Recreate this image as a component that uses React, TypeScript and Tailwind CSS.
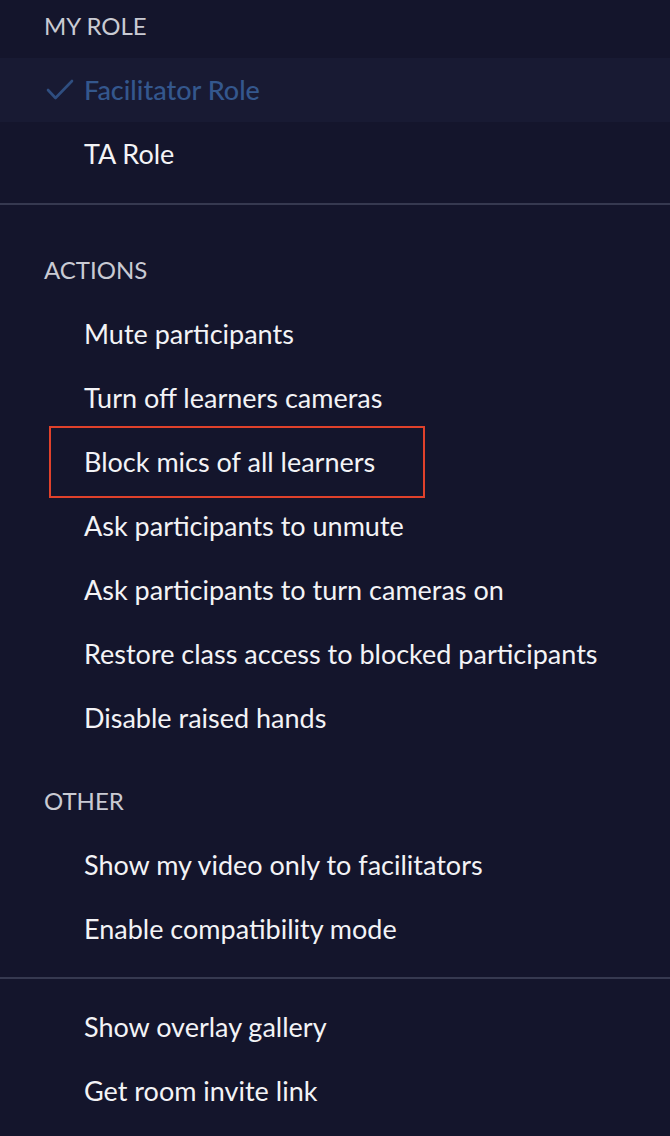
interface MenuItem {
    label: string;
    selected?: boolean;
    flagged?: boolean;
}

const roles: MenuItem[] = [
    { label: "Facilitator Role", selected: true },
    { label: "TA Role" },
];

const actions: MenuItem[] = [
    { label: "Mute participants" },
    { label: "Turn off learners cameras" },
    { label: "Block mics of all learners", flagged: true },
    { label: "Ask participants to unmute" },
    { label: "Ask participants to turn cameras on" },
    { label: "Restore class access to blocked participants" },
    { label: "Disable raised hands" },
];

const other: MenuItem[] = [
    { label: "Show my video only to facilitators" },
    { label: "Enable compatibility mode" },
];

const extras: MenuItem[] = [
    { label: "Show overlay gallery" },
    { label: "Get room invite link" },
];

function CheckMark() {
    return (
        <svg width="28" height="22" viewBox="0 0 28 22" fill="none" className="text-[#2f4e80]">
            <polyline points="2,11 9.5,19 26,2" stroke="currentColor" strokeWidth="2.6" strokeLinecap="round" strokeLinejoin="round" />
        </svg>
    );
}

function SectionTitle({ children }: { children: string }) {
    return (
        <div className="h-8 mb-4 px-[44px] flex items-center text-[24px] text-[#c9cad3]">
            {children}
        </div>
    );
}

function Row({ item }: { item: MenuItem }) {
    return (
        <div className={`h-16 flex items-center ${item.selected ? "bg-[#181a33]" : ""}`}>
            <div className="w-[84px] flex-shrink-0 flex justify-end pr-[10px]">
                {item.selected && <CheckMark />}
            </div>
            {item.flagged ? (
                <div className="-ml-[35px] h-[72px] w-[376px] border-2 border-[#e0412b] flex items-center pl-[33px]">
                    <span className="text-[27px] text-[#f3f3f6]">{item.label}</span>
                </div>
            ) : (
                <span className={`text-[27px] ${item.selected ? "text-[#34578d] font-medium" : "text-[#f3f3f6]"}`}>
                    {item.label}
                </span>
            )}
        </div>
    );
}

export default function App() {
    return (
        <div className="w-[670px] h-[1136px] overflow-hidden bg-[#14152c] font-['Lato',sans-serif]">
            <div className="pt-[10px]">
                <SectionTitle>MY ROLE</SectionTitle>
                {roles.map((item) => <Row key={item.label} item={item} />)}
            </div>
            <div className="mt-[17px] h-[2px] bg-[#363950]" />
            <div className="pt-[49px]">
                <SectionTitle>ACTIONS</SectionTitle>
                {actions.map((item) => <Row key={item.label} item={item} />)}
            </div>
            <div className="pt-[35px]">
                <SectionTitle>OTHER</SectionTitle>
                {other.map((item) => <Row key={item.label} item={item} />)}
            </div>
            <div className="mt-[16px] h-[2px] bg-[#363950]" />
            <div className="pt-[16px]">
                {extras.map((item) => <Row key={item.label} item={item} />)}
            </div>
        </div>
    );
}
